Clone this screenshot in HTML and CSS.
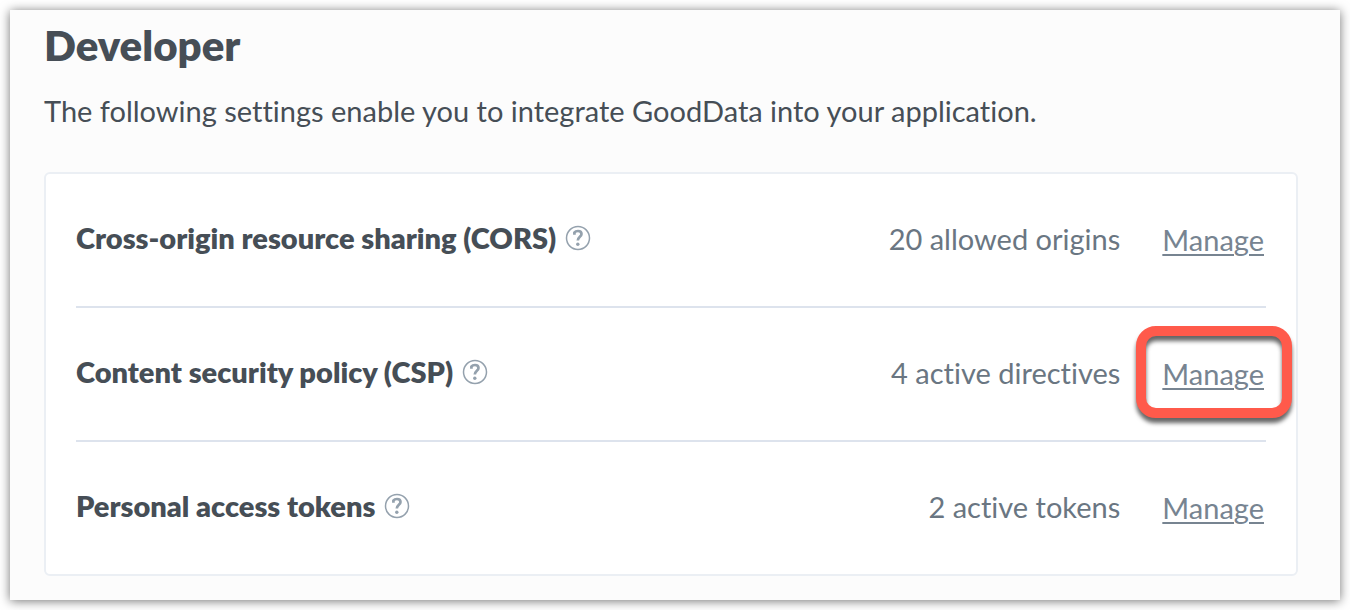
FILE: index.html
```html
<!DOCTYPE html>
<html lang="en">
<head>
<meta charset="utf-8">
<meta name="viewport" content="width=device-width, initial-scale=1">
<title>Developer settings</title>
<link rel="stylesheet" href="styles.css">
</head>
<body>
<svg class="symbols" aria-hidden="true">
  <symbol id="help" viewBox="0 0 26 26">
    <circle cx="13" cy="13" r="11.5" fill="none" stroke="currentColor" stroke-width="1.5"/>
    <path d="M9.400 9.800V7.600C10.200 6.500 11.600 6 13 6C15.200 6 16.500 7.100 16.500 9C16.500 11.800 12.800 11.800 12.800 15.600" fill="none" stroke="currentColor" stroke-width="2.700"/>
    <circle cx="12.800" cy="19.200" r="1.700" fill="currentColor"/>
  </symbol>
</svg>
<main class="panel">
  <h1 class="title">Developer</h1>
  <p class="intro">The following settings enable you to integrate GoodData into your application.</p>
  <ul class="settings">
    <li class="setting">
      <div class="label">
        <h2 class="name">Cross-origin resource sharing (CORS)</h2>
        <button class="help" type="button" aria-label="Help: CORS"><svg class="icon"><use href="#help"/></svg></button>
      </div>
      <span class="status">20 allowed origins</span>
      <a class="manage" href="#cors">Manage</a>
    </li>
    <li class="setting">
      <div class="label">
        <h2 class="name">Content security policy (CSP)</h2>
        <button class="help" type="button" aria-label="Help: CSP"><svg class="icon"><use href="#help"/></svg></button>
      </div>
      <span class="status">4 active directives</span>
      <a class="manage highlighted" href="#csp">Manage</a>
    </li>
    <li class="setting">
      <div class="label">
        <h2 class="name">Personal access tokens</h2>
        <button class="help" type="button" aria-label="Help: access tokens"><svg class="icon"><use href="#help"/></svg></button>
      </div>
      <span class="status">2 active tokens</span>
      <a class="manage" href="#tokens">Manage</a>
    </li>
  </ul>
</main>
</body>
</html>
```
FILE: styles.css
```css
* { box-sizing: border-box; }

body {
  margin: 0;
  padding: 10px;
  background: #fff;
  color: #464e56;
  font-family: Lato, "Open Sans", sans-serif;
  font-size: 29px;
  line-height: 36px;
  font-variant-ligatures: none;
}

.symbols { display: none; }

.panel {
  padding: 12px 42px 24px 34px;
  background: #fcfcfc;
  box-shadow: 0 1px 10px rgba(0, 0, 0, 0.55);
}

.title {
  margin: 0;
  font-size: 42px;
  line-height: 46px;
  font-weight: 800;
}

.intro { margin: 25px 0 43px; }

.settings {
  margin: 0;
  padding: 0 30px;
  list-style: none;
  background: #fff;
  border: 2px solid #ebeff4;
  border-radius: 6px;
}

.setting {
  display: flex;
  align-items: center;
  min-height: 132px;
}

.setting + .setting {
  min-height: 134px;
  border-top: 2px solid #dde3ed;
}

.label {
  display: flex;
  align-items: center;
  padding-bottom: 4px;
}

.name {
  margin: 0;
  font-size: 29px;
  line-height: 36px;
  font-weight: 800;
}

.help {
  display: flex;
  margin: 0 0 0 9px;
  padding: 0;
  border: 0;
  background: none;
  color: #94a1ad;
}

.icon {
  width: 26px;
  height: 26px;
}

.status {
  margin-left: auto;
  padding-bottom: 2px;
  color: #6a7682;
}

.manage {
  position: relative;
  margin: 0 2px 0 42px;
  color: #778491;
  text-decoration-thickness: 2px;
  text-underline-offset: 3px;
}

.highlighted::after {
  content: "";
  position: absolute;
  inset: -30px -28px -26px -26px;
  border: 10px solid #ff5a4b;
  border-radius: 20px;
  filter: drop-shadow(0 5px 2px rgba(0, 0, 0, 0.6));
  pointer-events: none;
}
```
